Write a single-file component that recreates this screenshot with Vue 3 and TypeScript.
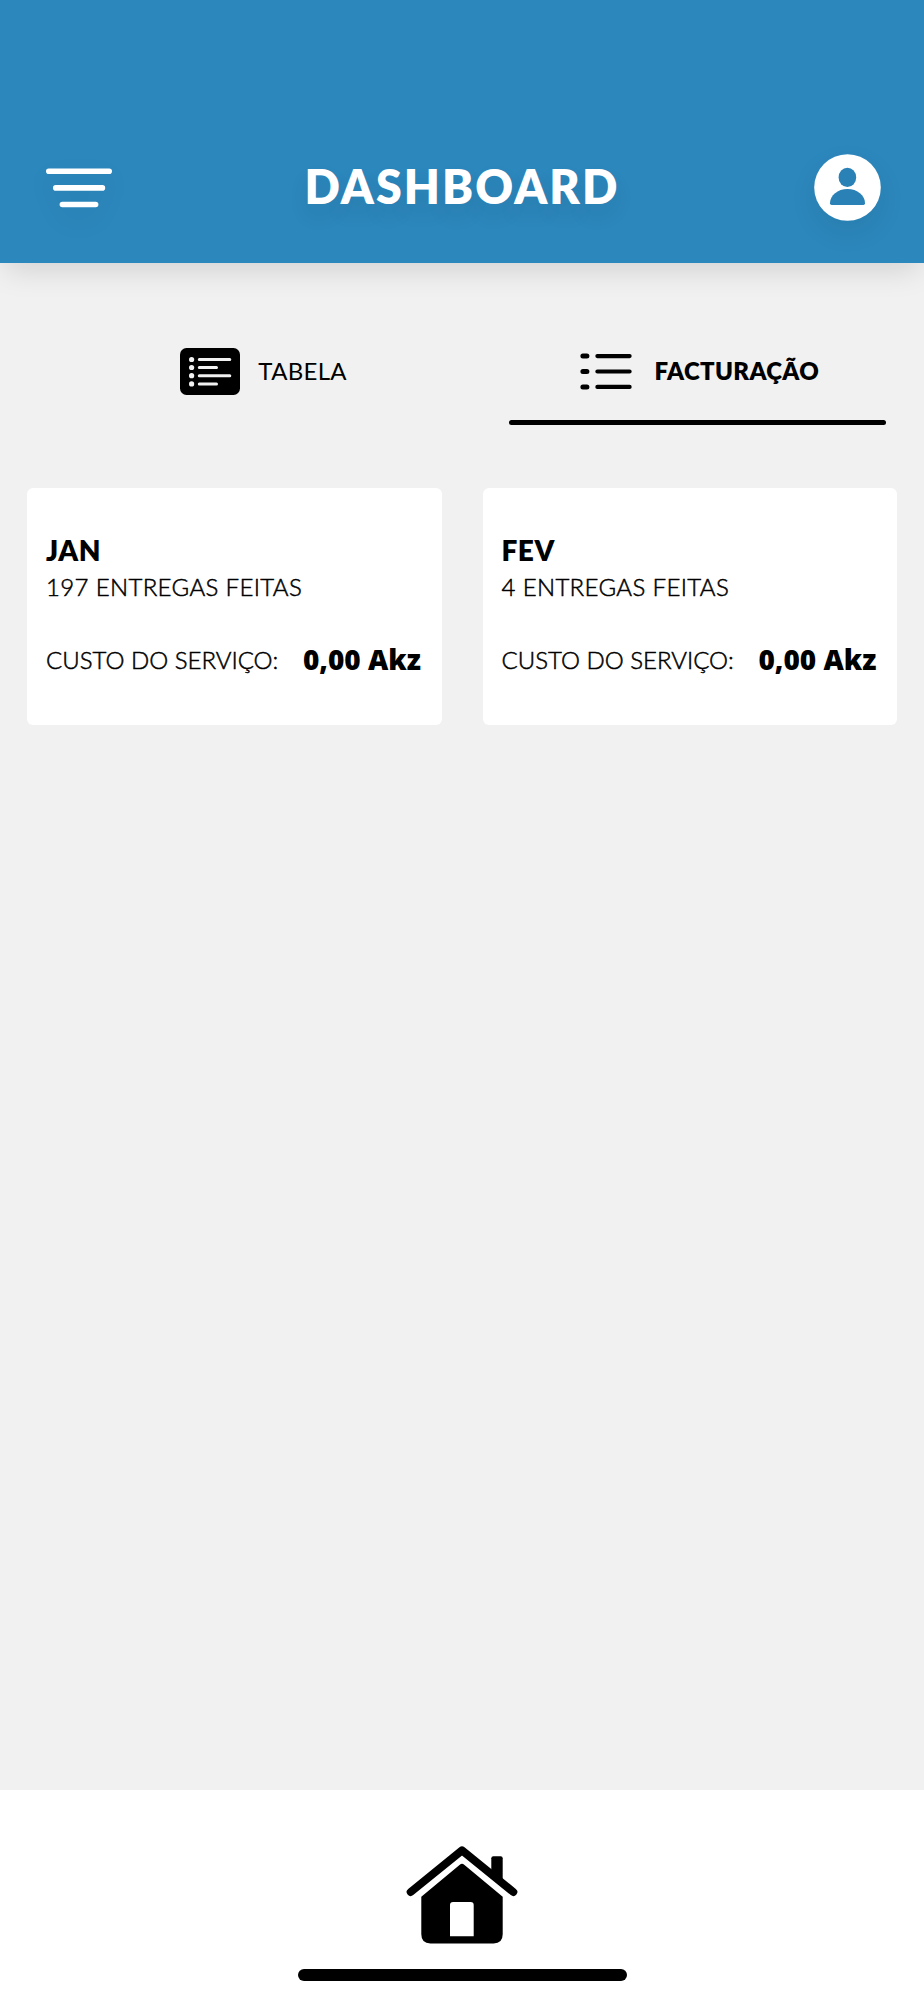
<script setup lang="ts">
interface Invoice {
  month: string
  deliveries: string
  cost: string
}

const invoices: Invoice[] = [
  { month: 'JAN', deliveries: '197 ENTREGAS FEITAS', cost: '0,00 Akz' },
  { month: 'FEV', deliveries: '4 ENTREGAS FEITAS', cost: '0,00 Akz' },
]
</script>

<template>
  <div class="screen">
    <header class="header">
      <svg class="menu" width="66" height="40" viewBox="0 0 66 40" fill="none" stroke="#fff" stroke-width="5.6" stroke-linecap="round">
        <path d="M2.8 3.2H63.2M9.8 19.9H56.4M16.4 36.5H49.6" />
      </svg>
      <h1 class="title">DASHBOARD</h1>
      <svg class="avatar" width="67" height="67" viewBox="0 0 67 67">
        <circle cx="33.5" cy="33.5" r="33.3" fill="#fff" />
        <ellipse cx="33.4" cy="23.4" rx="8.8" ry="9.7" fill="#2981b5" />
        <path d="M16 49.2C16 41.5 23.7 35.1 33.5 35.1S51 41.5 51 49.2Q51 50.9 49.3 50.9H17.7Q16 50.9 16 49.2Z" fill="#2981b5" />
      </svg>
    </header>

    <nav class="tabs">
      <div class="tab">
        <div class="tab-row tab-table">
          <svg width="60" height="47" viewBox="0 0 60 47">
            <rect width="60" height="47" rx="6.5" />
            <g fill="#f1f1f1">
              <circle cx="11.6" cy="11.5" r="2.6" />
              <circle cx="11.6" cy="19.5" r="2.6" />
              <circle cx="11.6" cy="27.7" r="2.6" />
              <circle cx="11.6" cy="35.9" r="2.6" />
            </g>
            <path d="M19.3 11.5H49.8M19.3 19.5H36.5M19.3 27.7H49.8M19.3 35.9H36.5" stroke="#f1f1f1" stroke-width="3" stroke-linecap="round" />
          </svg>
          <span>TABELA</span>
        </div>
      </div>
      <div class="tab active">
        <div class="tab-row">
          <svg width="52" height="37" viewBox="0 0 52 37" fill="none" stroke="#000" stroke-linecap="round">
            <path d="M2.9 3.1H6.9M2.9 18.5H6.9M2.9 33.9H6.9" stroke-width="5" />
            <path d="M17.4 3.1H49.6M17.4 18.5H49.6M17.4 33.9H49.6" stroke-width="4.2" />
          </svg>
          <span>FACTURAÇÃO</span>
        </div>
      </div>
    </nav>

    <main class="cards">
      <article v-for="item in invoices" :key="item.month" class="card">
        <h2 class="month">{{ item.month }}</h2>
        <p class="deliveries">{{ item.deliveries }}</p>
        <div class="cost">
          <span class="label">CUSTO DO SERVIÇO:</span>
          <strong class="price">{{ item.cost }}</strong>
        </div>
      </article>
    </main>

    <footer class="footer">
      <svg width="112" height="98" viewBox="406 1846 112 98">
        <path d="M410.7 1892L462 1850.4L513.3 1892" fill="none" stroke="#000" stroke-width="8" stroke-linecap="round" stroke-linejoin="round" />
        <path d="M491.3 1872V1858.3Q491.3 1856.2 493.4 1856.2H500.6Q502.7 1856.2 502.7 1858.3V1881Z" />
        <path fill-rule="evenodd" d="M421.3 1896.7L459.8 1864.7Q462 1863 464.2 1864.7L502.7 1896.7V1934.3Q502.7 1943.4 493.6 1943.4H430.4Q421.3 1943.4 421.3 1934.3ZM450 1936.2H473.7V1905Q473.7 1902 470.7 1902H453Q450 1902 450 1905Z" />
      </svg>
      <div class="indicator"></div>
    </footer>
  </div>
</template>

<style>
body {
  margin: 0;
  background: #f1f1f1;
}
</style>

<style scoped>
.screen {
  display: flex;
  flex-direction: column;
  width: 924px;
  height: 2000px;
  overflow: hidden;
  box-sizing: border-box;
  background: #f1f1f1;
  color: #000;
  font-family: Lato, 'Liberation Sans', sans-serif;
}

.header {
  display: grid;
  grid-template-columns: 66px 1fr 67px;
  align-items: center;
  flex: none;
  height: 263px;
  padding: 112px 43.5px 0 45.5px;
  box-sizing: border-box;
  background: #2c87bc;
  box-shadow: 0 12px 28px -5px rgba(0, 0, 0, 0.13);
}

.menu,
.avatar {
  filter: drop-shadow(0 11px 12px rgba(0, 0, 0, 0.07));
}

.title {
  margin: 0;
  padding: 0 1px 3px 0;
  color: #fff;
  font-size: 46.5px;
  line-height: 56px;
  font-weight: 800;
  letter-spacing: 2.1px;
  text-align: center;
  text-shadow: 0 11px 20px rgba(0, 0, 0, 0.09);
}

.tabs {
  display: grid;
  grid-template-columns: 377px 377px;
  column-gap: 57.5px;
  flex: none;
  height: 84.5px;
  margin: 77px 0 0.5px 74.5px;
}

.tab-row {
  display: flex;
  align-items: center;
  justify-content: center;
  gap: 22.7px;
  height: 62.5px;
  padding-left: 4px;
  font-size: 24px;
  line-height: 30px;
}

.tab-row span {
  padding-bottom: 1px;
}

.tab-table {
  gap: 18.2px;
  padding-left: 1px;
  letter-spacing: 0.3px;
}

.active {
  display: flex;
  flex-direction: column;
  justify-content: space-between;
}

.active .tab-row {
  font-weight: 800;
  letter-spacing: 0.35px;
}

.active::after {
  content: '';
  height: 5px;
  border-radius: 3px;
  background: #000;
}

.cards {
  display: grid;
  grid-template-columns: 414.5px 414.5px;
  column-gap: 41px;
  align-items: start;
  flex: 1;
  padding: 63.3px 27px 0;
}

.card {
  height: 236.7px;
  box-sizing: border-box;
  padding: 43.5px 20.5px 0 19px;
  border-radius: 6px;
  background: #fff;
}

.month {
  margin: 0;
  font-size: 28px;
  line-height: 36px;
  font-weight: 800;
  letter-spacing: 0.5px;
}

.deliveries {
  margin: 1px 0 0;
  font-size: 24px;
  font-weight: 300;
  line-height: 36px;
  letter-spacing: 0.35px;
  -webkit-text-stroke: 0.5px #000;
}

.cost {
  display: flex;
  align-items: center;
  justify-content: space-between;
  height: 36px;
  margin-top: 36.5px;
  white-space: nowrap;
}

.label {
  font-size: 24px;
  font-weight: 300;
  -webkit-text-stroke: 0.5px #000;
}

.price {
  font-family: 'Open Sans', Lato, sans-serif;
  font-size: 28px;
  line-height: 36px;
  font-weight: 800;
}

.footer {
  display: flex;
  flex-direction: column;
  align-items: center;
  flex: none;
  height: 210.5px;
  box-sizing: border-box;
  padding-top: 56.5px;
  background: #fff;
}

.footer svg {
  flex: none;
}

.indicator {
  width: 329px;
  height: 12px;
  margin: 25px 0 0 1px;
  border-radius: 6px;
  background: #000;
}
</style>
